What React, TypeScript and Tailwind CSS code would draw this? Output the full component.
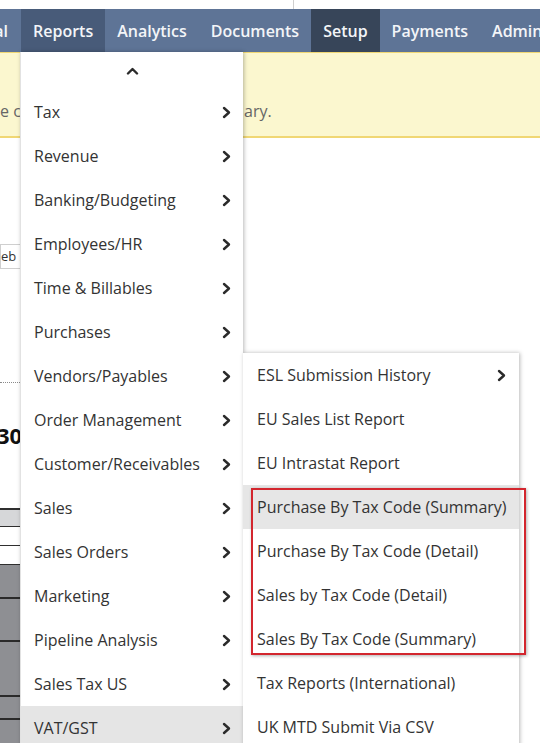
import React from "react";

const Chevron = () => (
  <svg width="9" height="13" viewBox="0 0 9 13" className="shrink-0">
    <path d="M2 2 L7 6.5 L2 11" fill="none" stroke="#2b2b2b" strokeWidth="2.4" strokeLinecap="round" strokeLinejoin="round" />
  </svg>
);

const mainItems = [
  "Tax",
  "Revenue",
  "Banking/Budgeting",
  "Employees/HR",
  "Time & Billables",
  "Purchases",
  "Vendors/Payables",
  "Order Management",
  "Customer/Receivables",
  "Sales",
  "Sales Orders",
  "Marketing",
  "Pipeline Analysis",
  "Sales Tax US",
  "VAT/GST",
];

const subItems = [
  { t: "ESL Submission History", c: true },
  { t: "EU Sales List Report" },
  { t: "EU Intrastat Report" },
  { t: "Purchase By Tax Code (Summary)", h: true },
  { t: "Purchase By Tax Code (Detail)" },
  { t: "Sales by Tax Code (Detail)" },
  { t: "Sales By Tax Code (Summary)" },
  { t: "Tax Reports (International)" },
  { t: "UK MTD Submit Via CSV" },
];

export default function App() {
  return (
    <div className="relative w-[540px] h-[743px] overflow-hidden bg-white font-['Open_Sans',sans-serif]">
      {/* top strip */}
      <div className="relative h-[9px] bg-white">
        <div className="absolute left-[293px] top-0 h-[9px] w-px bg-[#cfcfcf]" />
      </div>
      {/* nav */}
      <nav className="flex h-[43px] items-stretch overflow-hidden bg-[#5e7496] text-[16px] font-semibold text-[#f3f5f8] whitespace-nowrap">
        <div className="flex shrink-0 items-center justify-end overflow-hidden w-[21px] pr-[13px]">al</div>
        <div className="flex shrink-0 items-center px-[12px] bg-[#485b79]">Reports</div>
        <div className="flex shrink-0 items-center px-[12px]">Analytics</div>
        <div className="flex shrink-0 items-center px-[12px]">Documents</div>
        <div className="flex shrink-0 items-center px-[12px] bg-[#374559]">Setup</div>
        <div className="flex shrink-0 items-center px-[12px]">Payments</div>
        <div className="flex shrink-0 items-center px-[12px]">Admin</div>
      </nav>
      {/* yellow notice */}
      <div className="h-[86px] bg-[#fbf7cf] border-t border-b-2 border-[#f0d774] flex items-start pt-[46px] text-[16px] text-[#666] whitespace-nowrap">
        <span className="w-[244px] shrink-0">e c</span>
        <span>ary.</span>
      </div>
      {/* page content */}
      <div className="mt-[106px] h-[25px] w-[120px] border border-[#cfcfcf] flex items-center text-[13px] text-[#333] leading-none whitespace-nowrap">
        eb 2
      </div>
      <div className="mt-[113px] border-t border-dotted border-[#8a8a8a] w-[200px]" />
      <div className="mt-[41px] text-[22px] leading-[22px] font-bold text-[#111] -ml-[3px]">30</div>
      <div className="mt-[62px] w-[200px] text-[0px]">
        <div className="h-[19px] bg-[#d6d7d9] border-t-2 border-b border-[#2f2f2f]" />
        <div className="h-[19px] bg-white border-b border-[#2f2f2f]" />
        <div className="h-[19px] bg-white border-b border-[#2f2f2f]" />
        <div className="h-[34px] bg-[#8e8f93] border-b-2 border-[#2a2a2a]" />
        <div className="h-[43px] bg-[#8e8f93] border-b-2 border-[#2a2a2a]" />
        <div className="h-[55px] bg-[#8e8f93] border-b-2 border-[#2a2a2a]" />
        <div className="h-[23px] bg-[#8e8f93] border-b-2 border-[#2a2a2a]" />
        <div className="h-[30px] bg-[#8e8f93]" />
      </div>

      {/* main dropdown menu */}
      <div className="absolute left-[20px] top-[52px] w-[223px] h-[720px] bg-white border-l border-[#e2e2e2] shadow-[1px_0_4px_rgba(0,0,0,0.28)]">
        <div className="h-[38px] flex items-center justify-center">
          <svg width="13" height="8" viewBox="0 0 13 8">
            <path d="M2 6.5 L6.5 2 L11 6.5" fill="none" stroke="#2b2b2b" strokeWidth="2.4" strokeLinecap="round" strokeLinejoin="round" />
          </svg>
        </div>
        {mainItems.map((t) => (
          <div
            key={t}
            className={`h-[44px] flex items-center justify-between pl-[13px] pr-[12px] text-[16px] text-[#333] whitespace-nowrap ${t === "VAT/GST" ? "bg-[#e5e5e5]" : ""}`}
          >
            <span>{t}</span>
            <Chevron />
          </div>
        ))}
      </div>

      {/* submenu */}
      <div className="absolute left-[243px] top-[353px] w-[276px] h-[420px] bg-white shadow-[1px_0_4px_rgba(0,0,0,0.28)]">
        {subItems.map((s) => (
          <div
            key={s.t}
            className={`h-[44px] flex items-center justify-between pl-[14px] pr-[13px] text-[16px] text-[#333] whitespace-nowrap ${s.h ? "bg-[#e6e6e6]" : ""}`}
          >
            <span>{s.t}</span>
            {s.c ? <Chevron /> : null}
          </div>
        ))}
      </div>

      {/* red annotation box */}
      <div className="absolute left-[251px] top-[488px] w-[275px] h-[167px] border-2 border-[#d3262e] shadow-[1px_1px_3px_rgba(0,0,0,0.3)]" />
    </div>
  );
}
